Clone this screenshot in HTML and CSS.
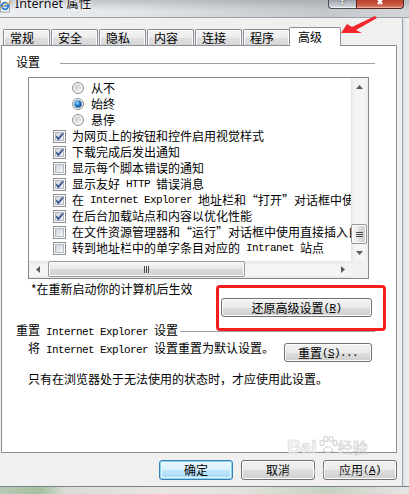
FILE: index.html
```html
<!DOCTYPE html>
<html lang="zh-CN">
<head>
<meta charset="utf-8">
<title>Internet 属性</title>
<link rel="stylesheet" href="styles.css">
</head>
<body>
<svg class="defs" width="0" height="0" aria-hidden="true">
  <defs>
    <linearGradient id="cbg" x1="0" y1="0" x2="1" y2="1">
      <stop offset="0" stop-color="#c9ced6"/>
      <stop offset="1" stop-color="#f7f8f9"/>
    </linearGradient>
    <linearGradient id="rg" x1="0" y1="0" x2="1" y2="1">
      <stop offset="0" stop-color="#c5c9ce"/>
      <stop offset="1" stop-color="#f4f5f6"/>
    </linearGradient>
    <radialGradient id="rdot" cx="0.4" cy="0.35" r="0.7">
      <stop offset="0" stop-color="#9fe0ff"/>
      <stop offset="0.45" stop-color="#2a86d0"/>
      <stop offset="1" stop-color="#0b3f7e"/>
    </radialGradient>
    <symbol id="cb-off" viewBox="0 0 13 13">
      <rect x="0.5" y="0.5" width="12" height="12" fill="#fdfdfd" stroke="#8e8f8f"/>
      <rect x="2.5" y="2.5" width="8" height="8" fill="url(#cbg)" stroke="#b4b9c0"/>
    </symbol>
    <symbol id="cb-on" viewBox="0 0 13 13">
      <rect x="0.5" y="0.5" width="12" height="12" fill="#fdfdfd" stroke="#8e8f8f"/>
      <rect x="2.5" y="2.5" width="8" height="8" fill="url(#cbg)" stroke="#b4b9c0"/>
      <path d="M3.2 6.4 L5.5 9 L10 3.2" fill="none" stroke="#3a5496" stroke-width="1.8"/>
    </symbol>
    <symbol id="rd-off" viewBox="0 0 12 12">
      <circle cx="6" cy="6" r="5.5" fill="#f6f6f6" stroke="#8e8f8f"/>
      <circle cx="6" cy="6" r="3.8" fill="url(#rg)"/>
    </symbol>
    <symbol id="rd-on" viewBox="0 0 12 12">
      <circle cx="6" cy="6" r="5.5" fill="#f6f6f6" stroke="#8e8f8f"/>
      <circle cx="6" cy="6" r="3.8" fill="url(#rdot)"/>
    </symbol>
  </defs>
</svg>

<div class="window">
  <div class="titlebar">
    <svg class="app-icon" width="12" height="14" viewBox="0 0 12 14">
      <rect x="0.5" y="-1" width="9" height="13" fill="#ffffff" stroke="#9aa4b0"/>
      <circle cx="5" cy="6" r="3.3" fill="none" stroke="#2f7fd6" stroke-width="1.8"/>
      <path d="M2 6 H8" stroke="#2f7fd6" stroke-width="1.4"/>
      <path d="M0 9 Q6 2 11 3" fill="none" stroke="#e8b23a" stroke-width="1"/>
    </svg>
    <span class="title">Internet 属性</span>
    <div class="caption-btns">
      <div class="cap help"><span>?</span></div>
      <div class="cap close">
        <svg width="12" height="6" viewBox="0 0 12 6"><path d="M1 -4 L8 4 M11 -4 L4 4" stroke="#ffffff" stroke-width="2.2"/></svg>
      </div>
    </div>
  </div>

  <div class="client">
    <div class="dialog">
      <div class="tabs">
        <div class="tab">常规</div>
        <div class="tab">安全</div>
        <div class="tab">隐私</div>
        <div class="tab">内容</div>
        <div class="tab">连接</div>
        <div class="tab">程序</div>
        <div class="tab active">高级</div>
      </div>

      <div class="panel">
        <div class="group-head">
          <span>设置</span><i class="rule first"></i>
        </div>

        <div class="listbox">
          <div class="items">
            <div class="item rdi"><svg class="rd"><use href="#rd-off"/></svg>从不</div>
            <div class="item rdi"><svg class="rd"><use href="#rd-on"/></svg>始终</div>
            <div class="item rdi"><svg class="rd"><use href="#rd-off"/></svg>悬停</div>
            <div class="item cbi"><svg class="cb"><use href="#cb-on"/></svg>为网页上的按钮和控件启用视觉样式</div>
            <div class="item cbi"><svg class="cb"><use href="#cb-on"/></svg>下载完成后发出通知</div>
            <div class="item cbi"><svg class="cb"><use href="#cb-off"/></svg>显示每个脚本错误的通知</div>
            <div class="item cbi"><svg class="cb"><use href="#cb-on"/></svg>显示友好<span class="m"> HTTP </span>错误消息</div>
            <div class="item cbi"><svg class="cb"><use href="#cb-on"/></svg>在<span class="m"> Internet Explorer </span>地址栏和<span class="q">“</span>打开<span class="q">”</span>对话框中使用直接插入自动完成</div>
            <div class="item cbi"><svg class="cb"><use href="#cb-on"/></svg>在后台加载站点和内容以优化性能</div>
            <div class="item cbi"><svg class="cb"><use href="#cb-off"/></svg>在文件资源管理器和<span class="q">“</span>运行<span class="q">”</span>对话框中使用直接插入自动完成</div>
            <div class="item cbi"><svg class="cb"><use href="#cb-off"/></svg>转到地址栏中的单字条目对应的<span class="m"> Intranet </span>站点</div>
          </div>
          <div class="vscroll">
            <div class="sb-btn"><svg width="7" height="4" viewBox="0 0 7 4"><path d="M3.5 0 L7 4 L0 4Z" fill="#5c5c5c"/></svg></div>
            <div class="vtrack">
              <div class="vthumb"><svg width="7" height="5" viewBox="0 0 7 5"><path d="M0 0.5 H7 M0 2.5 H7 M0 4.5 H7" stroke="#4a4a4a"/></svg></div>
            </div>
            <div class="sb-btn"><svg width="7" height="4" viewBox="0 0 7 4"><path d="M0 0 L7 0 L3.5 4Z" fill="#5c5c5c"/></svg></div>
          </div>
          <div class="hscroll">
            <div class="sb-btn"><svg width="4" height="7" viewBox="0 0 4 7"><path d="M0 3.5 L4 0 L4 7Z" fill="#5c5c5c"/></svg></div>
            <div class="htrack">
              <div class="hthumb"><svg width="5" height="7" viewBox="0 0 5 7"><path d="M0.5 0 V7 M2.5 0 V7 M4.5 0 V7" stroke="#4a4a4a"/></svg></div>
            </div>
            <div class="sb-btn"><svg width="4" height="7" viewBox="0 0 4 7"><path d="M0 0 L4 3.5 L0 7Z" fill="#5c5c5c"/></svg></div>
          </div>
          <div class="corner"></div>
        </div>

        <div class="note">*在重新启动你的计算机后生效</div>

        <div class="restore-row">
          <div class="btn-wrap">
            <button class="btn restore">还原高级设置<span class="m">(<u>R</u>)</span></button>
            <span class="highlight"></span>
          </div>
        </div>

        <div class="group-head reset-head">
          <span>重置<span class="m"> Internet Explorer </span>设置</span><i class="rule second"></i>
        </div>

        <div class="reset-row">
          <span class="reset-text">将<span class="m"> Internet Explorer </span>设置重置为默认设置。</span>
          <button class="btn reset">重置<span class="m">(<u>S</u>)...</span></button>
        </div>

        <div class="hint">只有在浏览器处于无法使用的状态时，才应使用此设置。</div>
      </div>

      <div class="actions">
        <button class="btn act default">确定</button>
        <button class="btn act">取消</button>
        <button class="btn act">应用<span class="m">(<u>A</u>)</span></button>
      </div>
    </div>
    <div class="frame-right"></div>
  </div>
  <div class="frame-bottom"></div>

  <svg class="arrow" width="44" height="26" viewBox="0 0 44 26">
    <path d="M5 21 L11 12 L16 15 L39 4 L41 6 L20 18 L26 21 Z" fill="#f2262b"/>
  </svg>

  <div class="watermark">
    <div class="wm-top">
      <span class="wm-bai">Bai</span>
      <svg class="wm-paw" width="20" height="20" viewBox="0 0 20 20">
        <g fill="none" stroke="#c8c8c8" stroke-width="1.2">
          <ellipse cx="4" cy="8" rx="2" ry="2.6"/>
          <ellipse cx="8" cy="4" rx="2" ry="2.6"/>
          <ellipse cx="13" cy="4" rx="2" ry="2.6"/>
          <ellipse cx="17" cy="8" rx="2" ry="2.6"/>
          <path d="M5 16 Q10 7 15 16 Q10 19 5 16Z"/>
        </g>
      </svg>
      <span class="wm-jy">经验</span>
    </div>
    <div class="wm-url">jingyan.baidu.com</div>
  </div>
</div>
</body>
</html>
```

FILE: styles.css
```css
* { box-sizing: border-box; }

html, body {
  margin: 0;
  padding: 0;
}

body {
  width: 409px;
  height: 494px;
  overflow: hidden;
  font-family: "Noto Sans CJK SC", "Noto Sans", sans-serif;
  font-size: 12px;
  color: #000;
  background: #d9dde2;
}

.defs {
  display: block;
  width: 0;
  height: 0;
}

.m {
  font-family: "Liberation Mono", monospace;
  font-size: 11px;
  letter-spacing: -0.6px;
  white-space: pre;
}

.q {
  font-feature-settings: "fwid" 1;
}

.window {
  position: relative;
  width: 409px;
  height: 494px;
  display: flex;
  flex-direction: column;
}

/* ---------- title bar ---------- */
.titlebar {
  height: 18px;
  flex: none;
  display: flex;
  align-items: flex-start;
  border-bottom: 1px solid #9aa1a8;
  background:
    linear-gradient(to bottom, rgba(120, 124, 130, 0.35) 0%, rgba(255, 255, 255, 0) 60%),
    linear-gradient(to right, #eceef1 0%, #e4e7ea 30%, #cdd0d4 62%, #c4c8cc 80%, #d3d6da 100%);
}

.app-icon {
  flex: none;
  display: block;
}

.title {
  margin-left: 3px;
  margin-top: -3px;
  font-family: "Noto Sans", "Noto Sans CJK SC", sans-serif;
  font-size: 12.5px;
  line-height: 14px;
  color: #111;
  text-shadow: 0 0 5px #fff, 0 0 3px #fff;
}

.caption-btns {
  margin-left: auto;
  margin-right: 5px;
  display: flex;
}

.cap {
  height: 9px;
  overflow: hidden;
  display: flex;
  justify-content: center;
  align-items: flex-start;
}

.help {
  width: 28px;
  border: 1px solid #4b4f54;
  border-top: none;
  border-right: none;
  border-radius: 0 0 0 4px;
  background: linear-gradient(to bottom, #9aa2aa, #c9ced3 70%, #dde1e4);
  box-shadow: inset 0 -1px 0 rgba(255, 255, 255, 0.6);
}

.help span {
  font-family: "Liberation Sans", sans-serif;
  font-weight: bold;
  font-size: 12px;
  line-height: 12px;
  margin-top: -6px;
  color: #fff;
  text-shadow: 0 0 2px #333;
}

.close {
  width: 48px;
  border: 1px solid #55261e;
  border-top: none;
  border-radius: 0 0 4px 0;
  background: linear-gradient(to bottom, #b8402c, #c95a45 60%, #dc8c78);
  box-shadow: inset 0 -1px 0 rgba(255, 200, 190, 0.6);
}

.close svg { display: block; }

/* ---------- client ---------- */
.client {
  flex: 1;
  display: flex;
  min-height: 0;
}

.dialog {
  width: 403px;
  flex: none;
  background: #f0f0f0;
  border-right: 1px solid #9aa1a8;
  display: flex;
  flex-direction: column;
  padding-top: 9px;
}

.frame-right {
  flex: 1;
  background: linear-gradient(to right, #dde1e5, #eef0f2);
}

.frame-bottom {
  height: 8px;
  flex: none;
  border-top: 1px solid #7d8288;
  background:
    linear-gradient(to right, #b9c9b4 0%, #a6c09f 10%, #d8ddd6 16%, #e9e6e4 40%, #dfe3dc 60%, #c6d3c1 80%, #e5e5e5 100%);
}

/* ---------- tabs ---------- */
.tabs {
  position: relative;
  z-index: 1;
  height: 18px;
  display: flex;
  align-items: flex-end;
  padding-left: 3px;
}

.tab {
  width: 47px;
  height: 16px;
  margin-right: 1px;
  padding-left: 6px;
  border: 1px solid #898c95;
  border-bottom: none;
  border-radius: 2px 2px 0 0;
  background: linear-gradient(to bottom, #f4f4f4 0%, #ececec 50%, #dfdfdf 51%, #d6d6d6 100%);
  box-shadow: inset 1px 1px 0 #fdfdfd, inset -1px 0 0 #fdfdfd;
  line-height: 15px;
}

.tab.active {
  width: 52px;
  height: 19px;
  margin-left: -2px;
  margin-right: 0;
  margin-bottom: -1px;
  padding-left: 8px;
  background: #fff;
  box-shadow: none;
  line-height: 17px;
}

/* ---------- panel ---------- */
.panel {
  margin-left: 1px;
  width: 396px;
  height: 408px;
  flex: none;
  border: 1px solid #898c95;
  background: #fff;
}

.group-head {
  height: 16px;
  display: flex;
  align-items: center;
  margin: 8px 21px 0 14px;
  line-height: 16px;
  white-space: nowrap;
}

.rule {
  flex: 1;
  height: 1px;
  background: #a0a0a0;
}

.rule.first {
  margin-left: 20px;
  margin-top: 3px;
}

.rule.second {
  margin-left: 2px;
  margin-top: 1px;
}

/* ---------- list box ---------- */
.listbox {
  margin: 7px 0 0 26px;
  width: 341px;
  height: 202px;
  border: 1px solid #828790;
  display: grid;
  grid-template-columns: 1fr 17px;
  grid-template-rows: 1fr 17px;
}

.items {
  overflow: hidden;
  padding-top: 2px;
  white-space: nowrap;
  min-width: 0;
}

.item {
  height: 16px;
  display: flex;
  align-items: center;
  line-height: 16px;
}

.item.cbi { padding-left: 24px; }
.item.rdi { padding-left: 43px; }

.cb {
  width: 13px;
  height: 13px;
  flex: none;
  margin-right: 6px;
}

.rd {
  width: 12px;
  height: 12px;
  flex: none;
  margin-right: 7px;
}

.vscroll {
  display: flex;
  flex-direction: column;
  background: linear-gradient(to right, #e4e4e4 0%, #f3f3f3 18%, #f5f5f5 82%, #e9e9e9 100%);
}

.sb-btn {
  flex: none;
  width: 17px;
  height: 17px;
  display: flex;
  align-items: center;
  justify-content: center;
}

.sb-btn svg { display: block; }

.vtrack {
  flex: 1;
  display: flex;
  flex-direction: column;
  justify-content: flex-end;
}

.vthumb {
  height: 20px;
  margin-right: 1px;
  border: 1px solid #979797;
  border-radius: 2px;
  background: linear-gradient(to right, #f5f5f5 0%, #e8e8e8 50%, #d9d9d9 51%, #d0d0d0 100%);
  box-shadow: inset 0 0 0 1px #fbfbfb;
  display: flex;
  align-items: center;
  justify-content: center;
}

.vthumb svg, .hthumb svg { display: block; }

.hscroll {
  display: flex;
  background: linear-gradient(to bottom, #e4e4e4 0%, #f3f3f3 18%, #f5f5f5 82%, #e9e9e9 100%);
}

.htrack {
  flex: 1;
  display: flex;
  align-items: stretch;
}

.hthumb {
  width: 197px;
  margin-left: 2px;
  margin-bottom: 1px;
  border: 1px solid #979797;
  border-radius: 2px;
  background: linear-gradient(to bottom, #f5f5f5 0%, #e8e8e8 50%, #d9d9d9 51%, #d0d0d0 100%);
  box-shadow: inset 0 0 0 1px #fbfbfb;
  display: flex;
  align-items: center;
  justify-content: center;
}

.corner {
  background: #f0f0f0;
}

/* ---------- lower part ---------- */
.note {
  height: 16px;
  line-height: 16px;
  margin-top: 2px;
  padding-left: 29px;
  white-space: nowrap;
}

.restore-row {
  display: flex;
  justify-content: flex-end;
  margin: 1px 24px 0 0;
}

.btn-wrap {
  position: relative;
}

.btn {
  font-family: inherit;
  font-size: 12px;
  color: #000;
  padding: 0;
  margin: 0;
  border: 1px solid #707070;
  border-radius: 3px;
  background: linear-gradient(to bottom, #f2f2f2 0%, #ebebeb 50%, #dddddd 51%, #cfcfcf 100%);
  box-shadow: inset 0 0 0 1px #fcfcfc;
  line-height: 16px;
  white-space: nowrap;
  display: flex;
  align-items: center;
  justify-content: center;
}

.btn u { text-decoration: underline; }

.btn.restore {
  width: 151px;
  height: 19px;
}

.highlight {
  position: absolute;
  left: -5px;
  top: -13px;
  right: -14px;
  bottom: -14px;
  border: 3px solid #f31f1f;
  border-radius: 4px;
  pointer-events: none;
}

.reset-head {
  margin-top: 6px;
}

.reset-row {
  display: flex;
  justify-content: space-between;
  align-items: flex-start;
  margin: 1px 24px 0 0;
  padding-left: 26px;
}

.reset-text {
  line-height: 16px;
  white-space: nowrap;
}

.btn.reset {
  width: 88px;
  height: 19px;
  margin-top: 3px;
}

.hint {
  margin-top: 9px;
  padding-left: 26px;
  line-height: 16px;
  white-space: nowrap;
}

.actions {
  display: flex;
  justify-content: flex-end;
  gap: 8px;
  margin-top: 7px;
  padding-right: 5px;
}

.btn.act {
  width: 74px;
  height: 20px;
}

.btn.default {
  border-color: #3c7fb1;
  background: linear-gradient(to bottom, #eaf6fd 0%, #d9f0fc 50%, #bee6fd 51%, #a7d9f5 100%);
  box-shadow: inset 0 0 0 1px #7fd4f6, inset 0 0 0 2px #e9f7fe;
}

/* ---------- overlays ---------- */
.arrow {
  position: absolute;
  left: 336px;
  top: 12px;
}

.watermark {
  position: absolute;
  left: 287px;
  top: 437px;
  opacity: 0.75;
  pointer-events: none;
}

.wm-top {
  display: flex;
  align-items: center;
}

.wm-bai {
  font-family: "Liberation Sans", sans-serif;
  font-weight: bold;
  font-size: 19px;
  line-height: 20px;
  color: #f4f4f4;
  -webkit-text-stroke: 0.6px #c4c4c4;
}

.wm-paw {
  margin-left: 1px;
  margin-top: -4px;
}

.wm-jy {
  font-size: 15px;
  line-height: 18px;
  color: #f4f4f4;
  -webkit-text-stroke: 0.6px #c4c4c4;
}

.wm-url {
  margin-top: 10px;
  margin-left: 0;
  font-family: "Liberation Sans", sans-serif;
  font-size: 10px;
  line-height: 10px;
  color: #dedede;
}
```
